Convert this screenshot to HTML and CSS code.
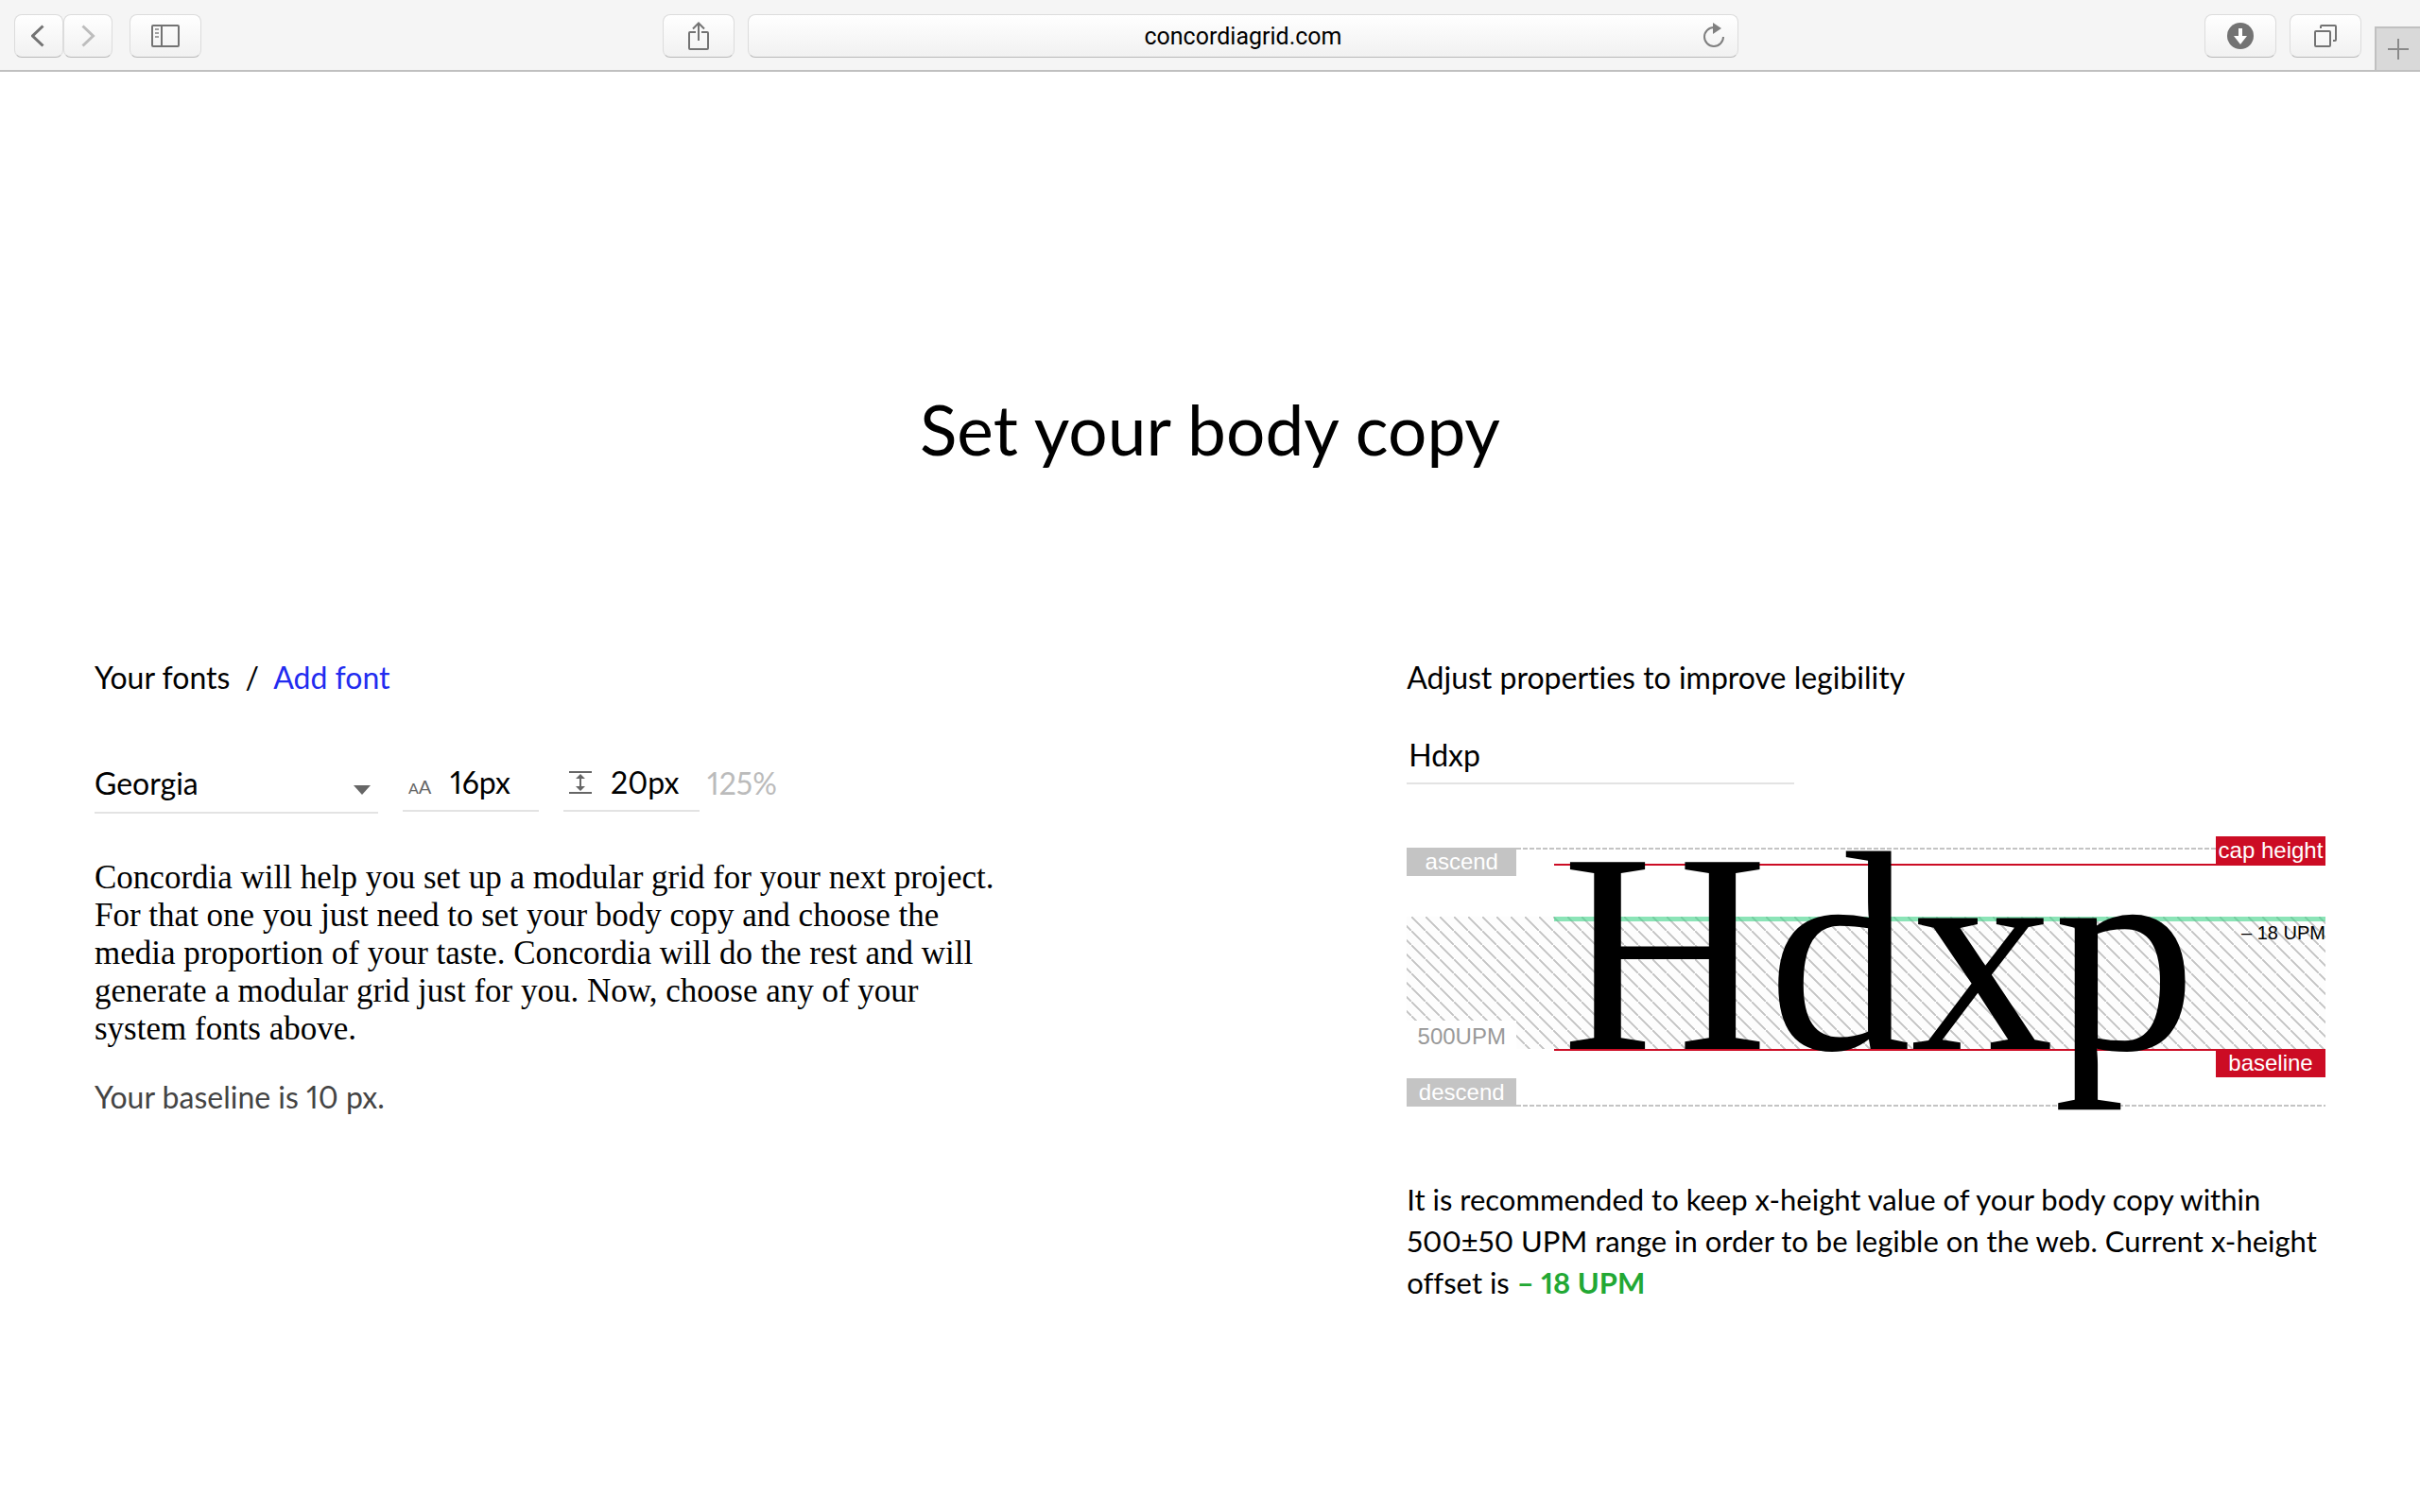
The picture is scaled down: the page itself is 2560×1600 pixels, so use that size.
FILE: index.html
```html
<!DOCTYPE html>
<html lang="en">

<head>
    <meta charset="UTF-8">
    <meta name="viewport" content="width=device-width, initial-scale=1.0">
    <title>Concordia</title>
    <link rel="stylesheet" href="styles.css">
</head>

<body>
    <header class="toolbar">
        <div class="toolbar-group">
            <div class="nav-buttons">
                <button class="tool nav" aria-label="Back">
                    <svg width="16" height="26" viewBox="0 0 16 26"><path d="M12.500 2.500L1.500 13L12.500 23.500" stroke="#737373" stroke-width="3" /></svg>
                </button>
                <button class="tool nav" aria-label="Forward">
                    <svg width="16" height="26" viewBox="0 0 16 26"><path d="M2.500 2.500L13.500 13L2.500 23.500" stroke="#bdbdbd" stroke-width="3" /></svg>
                </button>
            </div>
            <button class="tool" aria-label="Sidebar">
                <svg width="30" height="24" viewBox="0 0 30 24" stroke="#737373" stroke-width="2">
                    <rect x="1" y="1" width="28" height="22" rx="1" />
                    <path d="M11 1V23" />
                    <path d="M4 5H8M4 9H8M4 13H8" stroke="#a0a0a0" />
                </svg>
            </button>
        </div>

        <div class="toolbar-group">
            <button class="tool" aria-label="Share">
                <svg width="22" height="32" viewBox="0 0 22 32" stroke="#737373" stroke-width="2">
                    <path d="M8 12H2Q1 12 1 13V29Q1 30 2 30H20Q21 30 21 29V13Q21 12 20 12H14" />
                    <path d="M11 21V2M5 8.500L11 2.500L17 8.500" />
                </svg>
            </button>
            <div class="address">
                <input type="text" aria-label="Address" value="concordiagrid.com">
                <button class="reload" aria-label="Reload">
                    <svg width="22" height="28" viewBox="0 0 22 28">
                        <path d="M11 5A10 10 0 1 0 21 15" stroke="#808080" stroke-width="2" />
                        <path d="M10 0L19 6L10 12Z" fill="#808080" />
                    </svg>
                </button>
            </div>
        </div>

        <div class="toolbar-group toolbar-end">
            <button class="tool" aria-label="Downloads">
                <svg width="28" height="28" viewBox="0 0 28 28">
                    <circle cx="14" cy="14" r="14" fill="#737373" />
                    <path d="M12 6H16V14H21L14 23L7 14H12Z" fill="#fff" />
                </svg>
            </button>
            <button class="tool" aria-label="Show all tabs">
                <svg width="24" height="24" viewBox="0 0 24 24" stroke="#737373" stroke-width="2">
                    <rect x="1" y="7" width="16" height="16" rx="1" />
                    <path d="M7 4V2Q7 1 8 1H22Q23 1 23 2V16Q23 17 22 17H20" />
                </svg>
            </button>
            <button class="new-tab" aria-label="New tab">
                <svg width="22" height="22" viewBox="0 0 22 22" stroke="#8a8a8a" stroke-width="2"><path d="M11 0V22M0 11H22" /></svg>
            </button>
        </div>
    </header>

    <main class="container">
        <h1>Set your body copy</h1>

        <div class="columns">
            <section class="fonts">
                <h2>Your fonts <span class="slash">/</span> <a href="#">Add font</a></h2>

                <div class="controls">
                    <div class="select-field">
                        <select aria-label="Font family">
                            <option>Georgia</option>
                        </select>
                        <svg class="arrow" width="18" height="10" viewBox="0 0 18 10"><path d="M0 0H18L9 10Z" fill="#666" /></svg>
                    </div>
                    <div class="number-field">
                        <label for="size" class="size-icon"><small>A</small>A</label>
                        <input type="text" id="size" value="16px">
                    </div>
                    <div class="number-field">
                        <label for="leading" aria-label="Line height">
                            <svg width="24" height="24" viewBox="0 0 24 24" stroke="#666" stroke-width="2">
                                <path d="M0 1H24M0 23H24M12 6V18" />
                                <path d="M12 3L17 8H7ZM12 21L17 16H7Z" fill="#666" stroke="none" />
                            </svg>
                        </label>
                        <input type="text" id="leading" value="20px">
                    </div>
                    <span class="percent">125%</span>
                </div>

                <p class="copy">Concordia will help you set up a modular grid for your next project. For that one you just need to set your body copy and choose the media proportion of your taste. Concordia will do the rest and will generate a modular grid just for you. Now, choose any of your system fonts above.</p>
                <p class="baseline-note">Your baseline is 10 px.</p>
            </section>

            <section class="legibility">
                <h2><label for="sample">Adjust properties to improve legibility</label></h2>
                <input type="text" id="sample" class="sample" value="Hdxp">

                <div class="diagram">
                    <div class="hatch"></div>
                    <div class="line ascend"></div>
                    <div class="line descend"></div>
                    <div class="line cap"></div>
                    <div class="line base"></div>
                    <div class="line x-height"></div>
                    <div class="glyphs">Hdxp</div>
                    <span class="tag tag-ascend">ascend</span>
                    <span class="tag tag-upm">500UPM</span>
                    <span class="tag tag-descend">descend</span>
                    <span class="tag tag-cap">cap height</span>
                    <span class="tag tag-base">baseline</span>
                    <span class="offset">– 18 UPM</span>
                </div>

                <p class="advice">It is recommended to keep x-height value of your body copy within 500±50 UPM range in order to be legible on the web. Current <span class="term">x-height</span> offset is <b>– 18 UPM</b></p>
            </section>
        </div>
    </main>
</body>

</html>
```

FILE: styles.css
```css
* {
    box-sizing: border-box;
}

body {
    font-family: Lato, sans-serif;
    font-size: 32px;
    font-variant-ligatures: none;
    font-variant-numeric: proportional-nums;
    line-height: 44px;
    margin: 0;
    background-color: #fff;
    color: #000;
}

svg {
    display: block;
    fill: none;
}

button,
input,
select {
    font: inherit;
    color: inherit;
    margin: 0;
    padding: 0;
    border: none;
    background: none;
    outline: none;
}

/* browser toolbar */
.toolbar {
    display: grid;
    grid-template-columns: 701fr 1138fr 721fr;
    height: 76px;
    background-color: #f5f5f5;
    border-bottom: 2px solid #c0c0c0;
}

.toolbar-group {
    display: flex;
    align-items: center;
    gap: 14px;
    padding-top: 2px;
}

.toolbar-group:first-child {
    gap: 18px;
    padding-left: 15px;
}

.toolbar-end {
    justify-content: flex-end;
}

.nav-buttons {
    display: flex;
}

.tool,
.address {
    height: 46px;
    border: 1px solid #dcdcdc;
    border-bottom-color: #b8b8b8;
    border-radius: 8px;
    background: linear-gradient(#fff, #f1f1f1);
}

.tool {
    display: flex;
    flex: none;
    align-items: center;
    justify-content: center;
    width: 76px;
}

.nav {
    width: 52px;
}

.address {
    display: flex;
    flex: 1;
    align-items: center;
    padding: 0 14px 0 36px;
}

.address input {
    flex: 1;
    min-width: 0;
    padding-top: 2px;
    font-family: Roboto, sans-serif;
    font-size: 25px;
    line-height: 32px;
    text-align: center;
}

.new-tab {
    display: flex;
    flex: none;
    align-self: flex-end;
    align-items: center;
    justify-content: center;
    width: 48px;
    height: 46px;
    border: 2px solid #c0c0c0;
    border-width: 2px 0 0 2px;
    background-color: #d9d9d9;
}

/* page */
.container {
    padding: 330px 100px 0;
}

h1 {
    margin: 0;
    font-size: 73px;
    font-weight: 400;
    line-height: 96px;
    text-align: center;
}

h2 {
    margin: 0;
    font-size: 32px;
    font-weight: 400;
}

.columns {
    display: grid;
    grid-template-columns: 10fr 7fr;
    margin-top: 193px;
}

.slash {
    margin: 0 8px;
}

a {
    color: #222cf0;
    text-decoration: none;
}

.controls {
    display: flex;
    align-items: flex-start;
    margin-top: 64px;
}

.select-field {
    position: relative;
    width: 300px;
    margin-right: 26px;
    border-bottom: 2px solid #e3e3e3;
}

.select-field select {
    display: block;
    width: 100%;
    height: 56px;
    padding-bottom: 4px;
    appearance: none;
}

.arrow {
    position: absolute;
    right: 8px;
    bottom: 18px;
    pointer-events: none;
}

.number-field {
    display: flex;
    align-items: center;
    width: 144px;
    height: 56px;
    margin-right: 26px;
    padding: 0 0 4px 6px;
    border-bottom: 2px solid #e3e3e3;
}

.number-field label {
    width: 44px;
}

.number-field input {
    flex: 1;
    min-width: 0;
}

.number-field:nth-child(3) {
    margin-right: 8px;
}

.size-icon {
    padding-top: 10px;
    font-size: 20px;
    color: #666;
}

.size-icon small {
    font-size: 16px;
}

.percent {
    line-height: 52px;
    color: #bbb;
}

.copy {
    max-width: 960px;
    margin: 48px 0 0;
    font-family: Georgia, "Liberation Serif", serif;
    font-size: 35px;
    line-height: 40px;
}

.baseline-note {
    margin: 30px 0 0;
    color: #444;
}

.sample {
    display: block;
    width: 410px;
    height: 56px;
    margin-top: 35px;
    padding: 0 0 6px 2px;
    border-bottom: 2px solid #e3e3e3;
}

/* font metrics diagram */
.diagram {
    position: relative;
    height: 286px;
    margin-top: 55px;
    font-family: "Liberation Sans", sans-serif;
}

.diagram > * {
    position: absolute;
}

.hatch {
    top: 85px;
    left: 0;
    right: 0;
    height: 140px;
    background: linear-gradient(45deg, #fdfdfd 45%, #c4c4c4 47%, #c4c4c4 53%, #fdfdfd 55%) 5px 0 / 15px 15px;
}

.line {
    left: 156px;
    right: 0;
    height: 2px;
}

.ascend,
.descend {
    left: 116px;
    background: repeating-linear-gradient(90deg, #c4c4c4 0 5px, #fff 5px 7px);
}

.ascend {
    top: 12px;
}

.descend {
    top: 284px;
}

.cap {
    top: 29px;
    background-color: #cc0c24;
}

.base {
    top: 225px;
    background-color: #cc0c24;
}

.x-height {
    top: 85px;
    height: 5px;
    background-color: rgba(64, 212, 136, 0.6);
}

.glyphs {
    top: 0;
    left: 164px;
    font-family: "Liberation Serif", serif;
    font-size: 302px;
    line-height: 246px;
}

.tag {
    width: 116px;
    height: 30px;
    font-size: 24px;
    line-height: 30px;
    text-align: center;
    white-space: nowrap;
    color: #fff;
    background-color: #c4c4c4;
}

.tag-ascend {
    top: 12px;
    left: 0;
}

.tag-upm {
    top: 195px;
    left: 0;
    line-height: 34px;
    color: #999;
    background-color: #fff;
}

.tag-descend {
    top: 256px;
    left: 0;
}

.tag-cap {
    top: 0;
    right: 0;
    background-color: #cc0c24;
}

.tag-base {
    top: 225px;
    right: 0;
    background-color: #cc0c24;
}

.offset {
    top: 90px;
    right: 0;
    font-size: 20px;
    line-height: 24px;
}

.advice {
    margin: 76px 0 0;
    font-size: 31px;
}

.advice b {
    color: #22a834;
}

.term {
    white-space: nowrap;
}
```
